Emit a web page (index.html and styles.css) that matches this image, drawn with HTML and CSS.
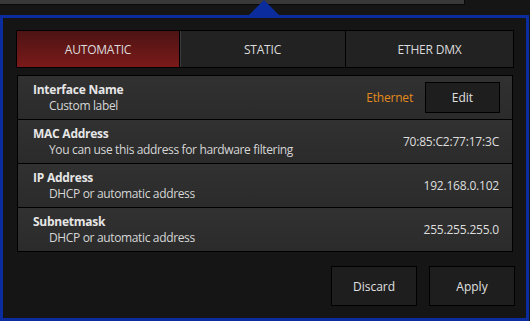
FILE: index.html
```html
<!DOCTYPE html>
<html>
<head>
<meta charset="utf-8">
<link rel="stylesheet" href="styles.css">
</head>
<body>
<div class="topbar"></div>
<div class="panel">
  <div class="tabs">
    <div class="tab tab-a active">AUTOMATIC</div>
    <div class="tab tab-b">STATIC</div>
    <div class="tab tab-c">ETHER DMX</div>
  </div>
  <div class="table">
    <div class="row">
      <div class="texts">
        <div class="label">Interface Name</div>
        <div class="sub">Custom label</div>
      </div>
      <div class="right">
        <span class="orange">Ethernet</span>
        <div class="btn edit">Edit</div>
      </div>
    </div>
    <div class="row">
      <div class="texts">
        <div class="label">MAC Address</div>
        <div class="sub">You can use this address for hardware filtering</div>
      </div>
      <div class="value">70:85:C2:77:17:3C</div>
    </div>
    <div class="row">
      <div class="texts">
        <div class="label">IP Address</div>
        <div class="sub">DHCP or automatic address</div>
      </div>
      <div class="value">192.168.0.102</div>
    </div>
    <div class="row">
      <div class="texts">
        <div class="label">Subnetmask</div>
        <div class="sub">DHCP or automatic address</div>
      </div>
      <div class="value">255.255.255.0</div>
    </div>
  </div>
  <div class="actions">
    <div class="btn big">Discard</div>
    <div class="btn big">Apply</div>
  </div>
</div>
</body>
</html>
```

FILE: styles.css
```css
* { box-sizing: border-box; }
html, body {
  margin: 0;
  padding: 0;
  width: 530px;
  height: 321px;
  overflow: hidden;
  background: #151515;
  font-family: "Open Sans", "Noto Sans", sans-serif;
  font-size: 12px;
  color: #dedede;
}
.topbar {
  width: 465px;
  height: 5px;
  background: #393939;
  border-bottom: 1px solid #0a0a0a;
  border-right: 1px solid #0a0a0a;
}
.panel {
  position: relative;
  margin-top: 10px;
  width: 529px;
  height: 306px;
  border: 3px solid #0b2c9c;
  background: #151515;
  padding: 12px 12px 0 13px;
  display: flex;
  flex-direction: column;
}
.panel::before {
  content: "";
  position: absolute;
  left: 246px;
  top: -18px;
  width: 0;
  height: 0;
  border-left: 15px solid transparent;
  border-right: 15px solid transparent;
  border-bottom: 15px solid #0b2c9c;
}
.tabs {
  display: flex;
  height: 38px;
  border: 1px solid #000;
  background: #000;
  gap: 1px;
}
.tab {
  display: flex;
  align-items: center;
  justify-content: center;
  background: #222;
  color: #dcdcdc;
  font-size: 12px;
  letter-spacing: -0.2px;
}
.tab-a { width: 162px; }
.tab-b { width: 165px; box-shadow: inset 1px 0 0 #3a3a3a; }
.tab-c { flex: 1; }
.tab.active {
  background: linear-gradient(#4d1313, #7b1a1a);
  box-shadow: none;
}
.table {
  margin: 7px 1px 0 1px;
  width: 496px;
  border: 1px solid #000;
  background: #000;
  display: flex;
  flex-direction: column;
  gap: 1px;
}
.row {
  height: 43px;
  background: linear-gradient(#313131, #2b2b2b);
  display: flex;
  align-items: center;
  justify-content: space-between;
  padding: 0 13px 0 15px;
}
.texts { display: flex; flex-direction: column; margin-top: 1px; }
.label {
  font-weight: bold;
  color: #e6e6e6;
  line-height: 16px;
  letter-spacing: -0.25px;
}
.sub {
  padding-left: 16px;
  color: #d6d6d6;
  line-height: 16px;
  letter-spacing: -0.35px;
}
.value {
  color: #dedede;
  letter-spacing: -0.2px;
}
.right {
  display: flex;
  align-items: center;
  gap: 12px;
  margin-right: -1px;
}
.orange { color: #e38a1e; letter-spacing: -0.2px; }
.btn {
  display: flex;
  align-items: center;
  justify-content: center;
  background: #1e1e1e;
  border: 1px solid #000;
  color: #e0e0e0;
}
.edit { width: 75px; height: 31px; }
.actions {
  display: flex;
  justify-content: flex-end;
  gap: 12px;
  margin-top: 14px;
  margin-right: -1px;
}
.big { width: 86px; height: 40px; }
```
